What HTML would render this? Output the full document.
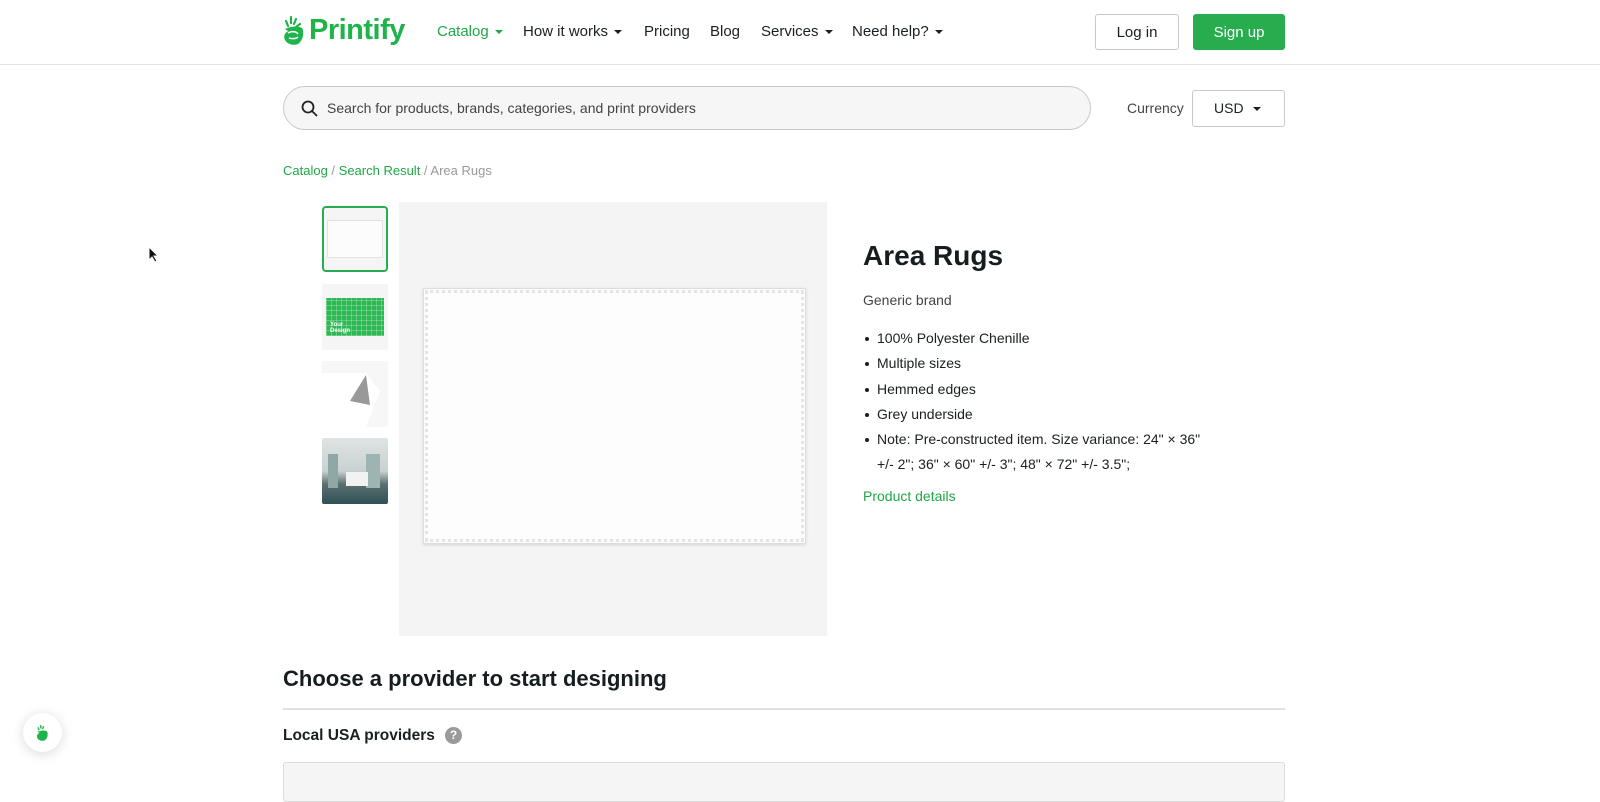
<!DOCTYPE html>
<html><head><meta charset="utf-8"><style>
*{box-sizing:border-box;margin:0;padding:0}
body{width:1600px;height:791px;overflow:hidden;background:#fff;font-family:"Liberation Sans",sans-serif;color:#1a1f22;position:relative}
.hdr{position:absolute;left:0;top:0;width:1600px;height:65px;border-bottom:1px solid #e3e3e3}
.logo{position:absolute;left:283px;top:14px;display:flex;align-items:center}
.logo span{font-size:29px;font-weight:bold;color:#1fb44a;margin-left:4px;letter-spacing:-0.5px}
.nav{position:absolute;top:23px;font-size:15px;color:#1a1f22}
.car{display:inline-block;border-left:4px solid transparent;border-right:4px solid transparent;border-top:4px solid currentColor;vertical-align:middle;margin-left:6px}
.btn{position:absolute;top:14px;height:36px;border-radius:3px;font-size:15px;display:flex;align-items:center;justify-content:center}
.search{position:absolute;left:283px;top:86px;width:808px;height:44px;border:1px solid #c9c9c9;border-radius:22px;background:#f6f6f6;font-size:14px;color:#444;padding-left:43px;line-height:42px}
.crumb{position:absolute;left:283px;top:163px;font-size:13px;color:#999}
.crumb a{color:#1fa846;text-decoration:none}
.thumb{position:absolute;left:322px;width:66px;height:66px;background:#f5f5f5;border-radius:2px;overflow:hidden}
.main{position:absolute;left:399px;top:202px;width:428px;height:434px;background:#f4f4f4}
.rug{position:absolute;left:423px;top:288px;width:383px;height:256px;background:#fdfdfd;border:1px solid #ddd;box-shadow:0 1px 3px rgba(0,0,0,.12)}
.rug:after{content:"";position:absolute;left:1px;top:1px;right:1px;bottom:1px;border:3px dotted #e4e4e4}
h1{position:absolute;left:863px;top:240px;font-size:28px;font-weight:bold;color:#161d20}
ul{position:absolute;left:863px;top:326px;list-style:none;font-size:14px;line-height:25.3px;color:#1a1f22}
ul li{padding-left:14px;position:relative}
ul li:before{content:"";position:absolute;left:2px;top:11px;width:4px;height:4px;border-radius:50%;background:#1a1f22}
</style></head><body>
<div class="hdr">
<div class="logo"><svg width="22" height="32" viewBox="0 0 22 32"><path d="M3 6l2 5M8 2v6M13 4l-2 5M17 9l-4 3" stroke="#1fb44a" stroke-width="2.2" stroke-linecap="round"/><path d="M2 14c4-2 12-4 17-1 2 3 2 12-4 16-5 2-11 0-13-4-2-4 0-8 4-9 3 0 6 2 5 4" fill="#1fb44a"/><path d="M5 18c3-2 8-2 10 1M6 23c3 1 7 1 9-1" stroke="#fff" stroke-width="1.5" fill="none"/></svg><span>Printify</span></div>
<div class="nav" style="left:437px;color:#1fa846">Catalog<i class="car"></i></div>
<div class="nav" style="left:523px">How it works<i class="car"></i></div>
<div class="nav" style="left:644px">Pricing</div>
<div class="nav" style="left:710px">Blog</div>
<div class="nav" style="left:761px">Services<i class="car"></i></div>
<div class="nav" style="left:852px">Need help?<i class="car"></i></div>
<div class="btn" style="left:1095px;width:84px;border:1px solid #c9c9c9">Log in</div>
<div class="btn" style="left:1193px;width:92px;background:#27ad4e;color:#fff">Sign up</div>
</div>
<div class="search"><svg style="position:absolute;left:17px;top:13px" width="17" height="17" viewBox="0 0 17 17"><circle cx="7" cy="7" r="5.5" stroke="#222" stroke-width="1.8" fill="none"/><path d="M11 11l5 5" stroke="#222" stroke-width="1.8"/></svg>Search for products, brands, categories, and print providers</div>
<div style="position:absolute;left:1127px;top:100px;font-size:14px;color:#444">Currency</div>
<div style="position:absolute;left:1192px;top:90px;width:93px;height:37px;border:1px solid #c9c9c9;border-radius:3px;font-size:14px;line-height:35px;padding-left:21px">USD<i class="car" style="margin-left:9px"></i></div>
<div class="crumb"><a>Catalog</a> / <a>Search Result</a> / Area Rugs</div>
<div class="thumb" style="top:206px;border:2px solid #27ad4e;border-radius:4px"><div style="position:absolute;left:3px;top:12px;width:56px;height:38px;background:#fcfcfc;border:1px solid #e3e3e3"></div></div>
<div class="thumb" style="top:284px"><div style="position:absolute;left:4px;top:14px;width:58px;height:38px;background:#2eb853;background-image:repeating-linear-gradient(90deg,rgba(255,255,255,.25) 0 1px,transparent 1px 5px),repeating-linear-gradient(0deg,rgba(255,255,255,.25) 0 1px,transparent 1px 5px)"></div><div style="position:absolute;left:8px;top:38px;font-size:6px;color:#fff;font-weight:bold;line-height:6px">Your<br>Design</div></div>
<div class="thumb" style="top:361px;background:#f7f7f7"><svg width="66" height="66"><path d="M0 12L44 12L58 30L44 66L0 66z" fill="#fff"/><path d="M44 14L28 40l20 4z" fill="#999"/></svg></div>
<div class="thumb" style="top:438px;background:linear-gradient(#dfe3e3 0,#c9d2d2 50%,#5b6f70 70%,#2f5158 100%)"><div style="position:absolute;left:6px;top:16px;width:10px;height:34px;background:#8fa7a5"></div><div style="position:absolute;left:44px;top:16px;width:14px;height:34px;background:#9db4b2"></div><div style="position:absolute;left:24px;top:34px;width:22px;height:14px;background:#f2f2f2"></div></div>
<div class="main"></div>
<div class="rug"></div>
<h1>Area Rugs</h1>
<div style="position:absolute;left:863px;top:292px;font-size:14px;color:#444">Generic brand</div>
<ul><li>100% Polyester Chenille</li><li>Multiple sizes</li><li>Hemmed edges</li><li>Grey underside</li><li>Note: Pre-constructed item. Size variance: 24" × 36"<br>+/- 2"; 36" × 60" +/- 3"; 48" × 72" +/- 3.5";</li></ul>
<div style="position:absolute;left:863px;top:488px;font-size:14px;color:#1fa846">Product details</div>
<div style="position:absolute;left:283px;top:666px;font-size:22px;font-weight:bold;color:#161d20">Choose a provider to start designing</div>
<div style="position:absolute;left:283px;top:708px;width:1002px;height:2px;background:#e0e0e0"></div>
<div style="position:absolute;left:283px;top:727px;font-size:15.5px;font-weight:bold">Local USA providers</div>
<div style="position:absolute;left:445px;top:727px;width:17px;height:17px;border-radius:50%;background:#9a9a9a;color:#fff;font-size:12px;font-weight:bold;text-align:center;line-height:17px">?</div>
<div style="position:absolute;left:283px;top:762px;width:1002px;height:40px;border:1px solid #ddd;background:#f5f5f5;border-radius:3px"></div>
<div style="position:absolute;left:23px;top:713px;width:39px;height:39px;border-radius:50%;background:#fff;box-shadow:0 2px 12px rgba(0,0,0,.15)"><svg style="position:absolute;left:13px;top:11px" width="13" height="18" viewBox="0 0 22 32"><path d="M3 6l2 5M8 2v6M13 4l-2 5" stroke="#1fb44a" stroke-width="2.5"/><path d="M2 14c4-2 12-4 17-1 2 3 2 12-4 16-5 2-11 0-13-4-2-4 0-8 4-9" fill="#1fb44a"/></svg></div>
<svg style="position:absolute;left:148px;top:246px" width="12" height="17"><path d="M1 1v13l3-3 3 5 2-1-3-5h4z" fill="#111" stroke="#fff" stroke-width="1"/></svg>
</body></html>
